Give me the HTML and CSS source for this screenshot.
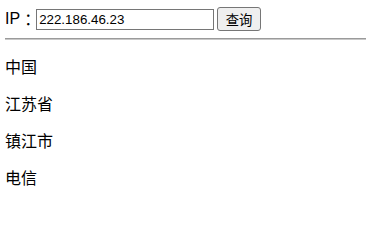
FILE: index.html
```html
<!DOCTYPE html>
<html lang="zh-CN">
<head>
<meta charset="utf-8">
<title>IP 查询</title>
<link rel="stylesheet" href="styles.css">
</head>
<body>
<form class="query">
  <label class="label" for="ip">IP<span class="colon">：</span></label>
  <input class="ip-input" id="ip" type="text" value="222.186.46.23">
  <button class="btn" type="button">查询</button>
</form>
<hr class="rule">
<p class="item">中国</p>
<p class="item">江苏省</p>
<p class="item">镇江市</p>
<p class="item">电信</p>
</body>
</html>
```

FILE: styles.css
```css
html, body {
  background: #fff;
}
body {
  margin: 7px 0 0 5px;
  font-family: "Liberation Sans", "Noto Sans CJK SC", sans-serif;
  font-size: 16px;
  color: #000;
}
.query {
  display: flex;
  align-items: center;
  margin: 0;
  height: 24px;
}
.label {
  display: flex;
  align-items: center;
  font-size: 16px;
  line-height: 20px;
}
.colon {
  display: inline-block;
  width: 16px;
  text-align: center;
  font-family: "Noto Sans CJK TC", sans-serif;
}
.ip-input {
  box-sizing: border-box;
  width: 178px;
  height: 21px;
  margin: 1px 0 0 0;
  padding: 1px 2px;
  border: 1px solid #767676;
  border-radius: 0;
  font-family: "Liberation Sans", sans-serif;
  font-size: 13.33px;
  color: #000;
  background: #fff;
}
.btn {
  box-sizing: border-box;
  width: 44px;
  height: 24px;
  margin-left: 3px;
  padding: 0 6px;
  border: 1px solid #767676;
  border-radius: 3px;
  background: #efefef;
  font-family: "Noto Sans CJK SC", sans-serif;
  font-size: 13.33px;
  color: #000;
}
.rule {
  margin: 7px 0 0 0;
  height: 0;
  border: 0;
  border-top: 1px solid #9a9a9a;
  border-bottom: 1px solid #c8c8c8;
}
.item {
  margin: 16px 0;
  line-height: 21px;
  font-family: "Noto Sans CJK SC", sans-serif;
}
```
